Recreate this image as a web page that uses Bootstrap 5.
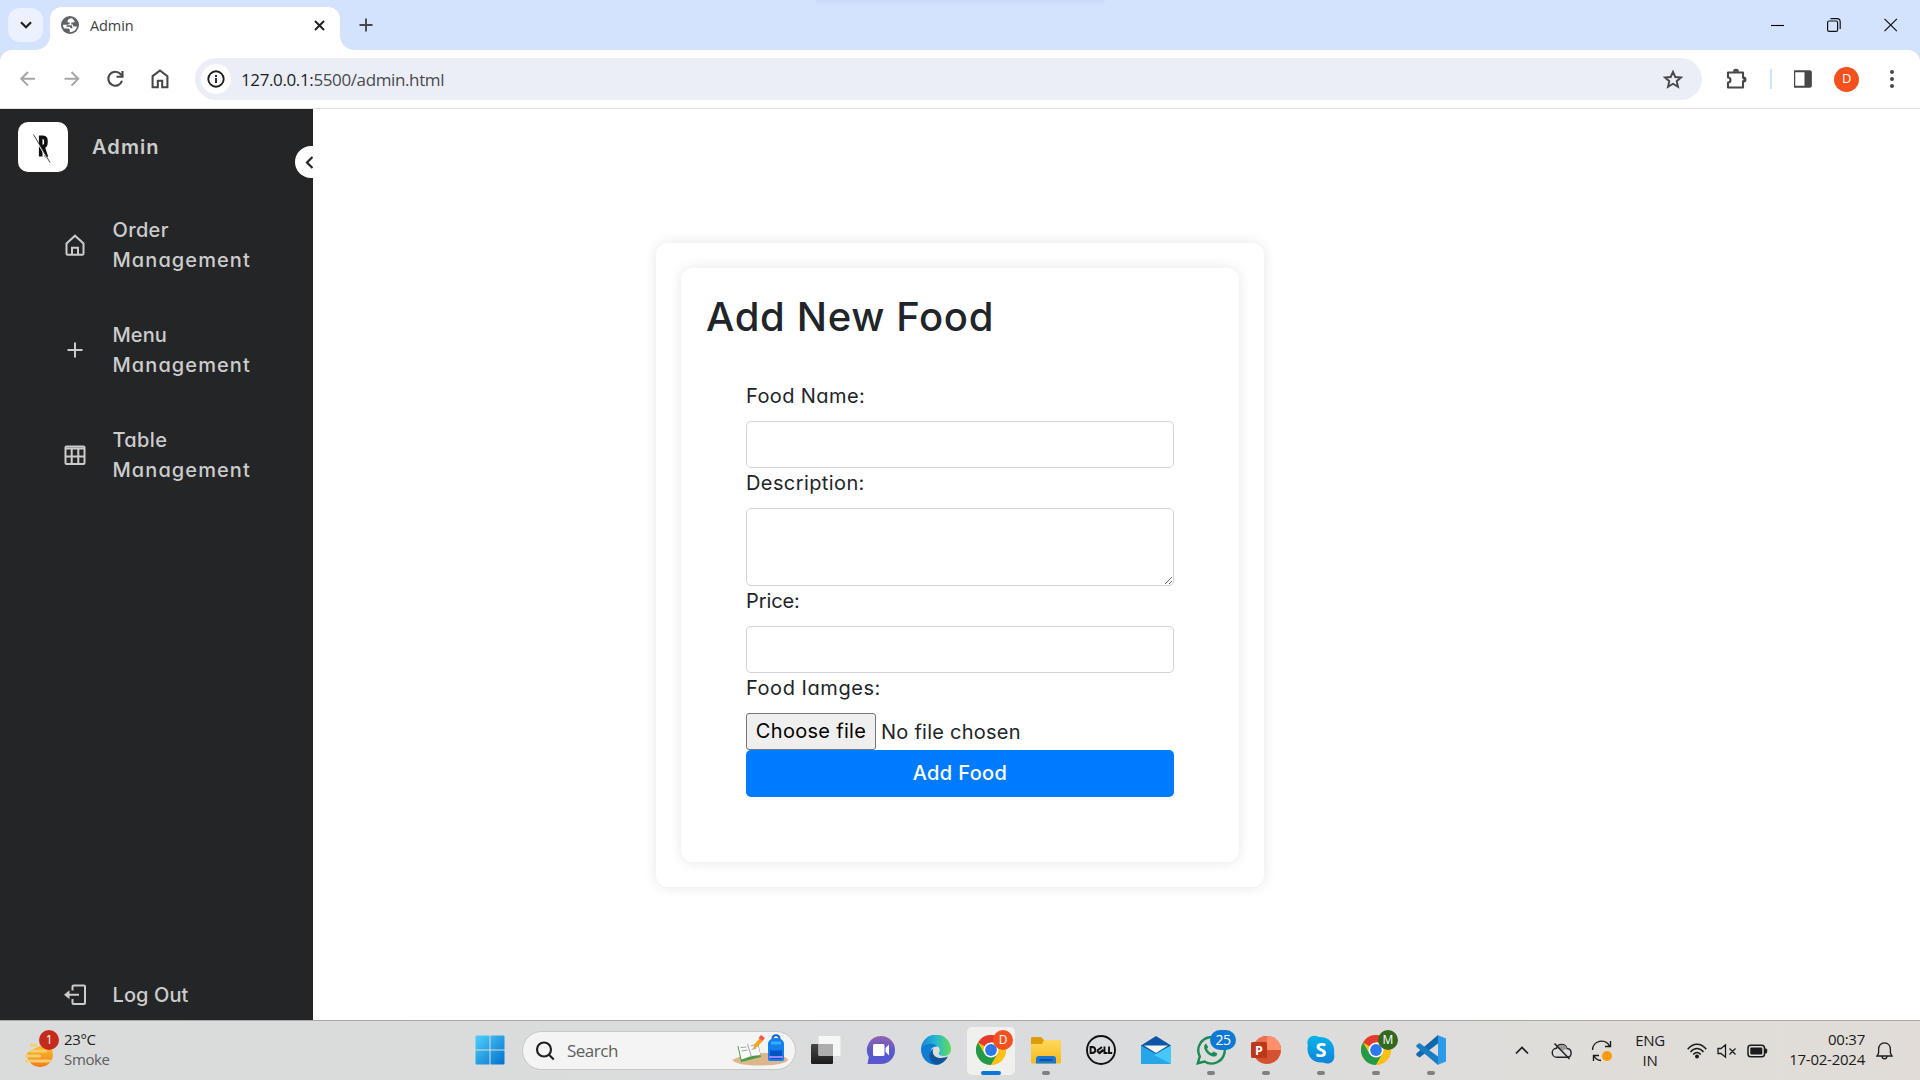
<!DOCTYPE html>
<html lang="en">
<head>
<meta charset="utf-8">
<meta name="viewport" content="width=device-width, initial-scale=1">
<title>Admin</title>
<link href="https://cdn.jsdelivr.net/npm/bootstrap@5.3.0/dist/css/bootstrap.min.css" rel="stylesheet">
<style>
  body { width: 1920px; height: 1080px; overflow: hidden; background: #fff; font-family: "Open Sans", "Noto Sans", sans-serif; }
  svg { display: block; flex: none; }

  /* browser window */
  .tab-strip { height: 50px; background: #d3e2fd; padding-left: 8px; position: relative; }
  .top-shade { position: absolute; left: 815px; top: 0; width: 290px; height: 5px; background: linear-gradient(#c9daf6, #d3e2fd); border-radius: 0 0 20px 20px; }
  .tab-search { width: 35px; height: 34px; border-radius: 12px; background: #ebf1fe; margin-top: 8px; }
  .browser-tab { position: relative; width: 290px; height: 43px; margin: 7px 0 0 7px; background: #fff; border-radius: 12px 12px 0 0; padding: 0 15px 7px 11px; }
  .browser-tab::before, .browser-tab::after { content: ""; position: absolute; bottom: 0; width: 14px; height: 14px; }
  .browser-tab::before { left: -14px; background: radial-gradient(circle at 0 0, transparent 13.5px, #fff 14px); }
  .browser-tab::after { right: -14px; background: radial-gradient(circle at 100% 0, transparent 13.5px, #fff 14px); }
  .tab-title { font-size: 14.5px; letter-spacing: -.1px; color: #3c3f43; margin-left: 11px; padding-top: 1px; }
  .new-tab { margin: 18px 0 0 19px; }
  .win-controls { margin-right: 21px; gap: 40px; padding-top: 3px; height: 46px; }
  .toolbar-wrap { background: #d3e2fd; }
  .tool-bar { height: 59px; background: #fff; border-radius: 12px 12px 0 0; border-bottom: 1px solid #dedede; padding: 0 17px 0 17px; }
  .nav-icons { gap: 21px; width: 178px; }
  .omnibox { width: 1507px; height: 42px; border-radius: 21px; background: #ebeef7; padding: 0 18px 0 6px; }
  .site-info { width: 30px; height: 30px; border-radius: 50%; background: #fff; }
  .url-text { font-size: 17px; letter-spacing: -.38px; color: #474a4e; margin-left: 10px; padding-top: 1px; }
  .url-text b { font-weight: 400; color: #1c1d1f; }
  .tool-sep { width: 2px; height: 20px; background: #d0e1fd; }
  .avatar-dot { width: 25px; height: 25px; border-radius: 50%; background: #f4511e; color: #fff; font-size: 13px; }

  /* admin page */
  .admin-page { height: 911px; font-family: "Inter", "Open Sans", sans-serif; font-feature-settings: "cv11"; font-size: 20px; line-height: 30px; letter-spacing: .4px; background: #fff; color: #212529; }
  .side-panel { width: 313px; background: #242526; color: #ccc; font-weight: 500; position: relative; overflow: hidden; padding: 13px 18px 10px; }
  .logo-box { width: 50px; height: 50px; border-radius: 10px; background: #fff; }
  .brand-name { font-weight: 600; margin-left: 24px; letter-spacing: 1.1px; }
  .fold-btn { position: absolute; left: 295px; top: 37px; width: 32px; height: 32px; border-radius: 50%; background: #fff; }
  .side-links { margin-top: 43px; gap: 45px; }
  .side-item { padding-left: 45px; gap: 25.5px; letter-spacing: .35px; }
  .side-item .wide { letter-spacing: 1.08px; }
  .side-item .tidy { letter-spacing: .1px; }
  .content-area { padding: 134px 0 0 343px; }
  .outer-card { width: 608px; height: 644px; border-radius: 12px; padding: 25px; box-shadow: 0 0 13px rgba(0,0,0,.1); background: #fff; }
  .inner-card { height: 594px; border-radius: 12px; padding: 25px; box-shadow: 0 0 13px rgba(0,0,0,.1); background: #fff; }
  .inner-card h1 { font-size: 40px; line-height: 48px; font-weight: 500; letter-spacing: .65px; margin: 0; }
  .food-form { padding: 40px 40px 0; }
  .food-form label { display: block; margin-bottom: 10px; }
  .food-form .form-control { height: 47.3px; border-radius: 5px; border-color: #ced4da; padding: 7px 15px; }
  .food-form textarea.form-control { height: 77.3px; }
  .file-row { height: 37px; gap: 5px; }
  .file-btn { border: 1px solid #767676; border-radius: 3px; background: #efefef; color: #000; height: 37px; width: 130px; line-height: 30px; padding: 2px 0; text-align: center; letter-spacing: .3px; }
  .file-name { letter-spacing: .25px; padding-top: 2px; }
  .food-form .btn-add { background: #007bff; color: #fff; font-size: 20px; font-weight: 500; line-height: 30px; height: 47px; border: 0; border-radius: 5px; letter-spacing: .35px; }

  /* task bar */
  .task-bar { height: 60px; border-top: 1px solid #a9a9a9; background: linear-gradient(90deg, #dadcdc 0, #dbdcdd 60%, #e0ddd9 85%, #e1dcd8); color: #1b1b1b; font-size: 15px; line-height: 20px; }
  .weather { width: 466px; padding: 0 0 4px 25px; gap: 11px; letter-spacing: -.35px; }
  .weather small { font-size: 15px; color: #5c5d5e; }
  .task-cell { width: 48px; height: 48px; margin-right: 7px; border-radius: 5px; position: relative; padding-bottom: 1px; }
  .task-cell.on { background: #f0f0ef; }
  .task-cell.run::after { content: ""; position: absolute; bottom: 0; left: 20px; width: 8px; height: 4px; border-radius: 2px; background: #808080; }
  .task-cell.on::after { left: 14px; width: 20px; background: #0b78d6; }
  .search-pill { width: 274px; height: 39px; border-radius: 20px; background: #f4f4f4; border: 1px solid #c6c7c7; margin: 0 6px 0 8px; padding: 0 6px 0 12px; font-size: 17px; color: #5e5e5e; letter-spacing: -.5px; }
  .tag-dot { position: absolute; border-radius: 10px; color: #fff; font-size: 12px; line-height: 20px; text-align: center; width: 20px; height: 20px; left: 25px; top: 3px; }
  .tag-dot.count { background: #0e78d5; width: 26px; font-size: 14px; left: 23px; letter-spacing: -.4px; }
  .tray { margin-left: auto; padding-right: 27px; letter-spacing: -.3px; }
  .lang-box { width: 30px; margin-right: 22px; padding-bottom: 2px; }
  .clock { width: 80px; text-align: right; margin: 0 11px 0 0; padding-bottom: 4px; letter-spacing: -.25px; white-space: nowrap; }
</style>
<script src="https://cdn.jsdelivr.net/npm/bootstrap@5.3.0/dist/js/bootstrap.bundle.min.js"></script>
</head>
<body class="d-flex flex-column">

<header>
  <div class="tab-strip d-flex align-items-start">
    <div class="top-shade"></div>
    <div class="tab-search d-flex align-items-center justify-content-center">
      <svg width="12" height="8" viewBox="0 0 12 8" fill="none" stroke="#1f1f1f" stroke-width="2.2"><path d="M1 1.2l5 5 5-5"/></svg>
    </div>
    <div class="browser-tab d-flex align-items-center">
      <svg width="18" height="18" viewBox="0 0 18 18"><circle cx="9" cy="9" r="9" fill="#5f6368"/><path d="M11 2.300C8 2.500 6.500 3.800 6.500 5.200c0 1.300 1.200 1.300 2.300 1.300 0 1.500-.8 2.200-2.300 2.200H2c0 1.500.5 2.800 1.300 3.900h3.500c1.500 0 2 .7 2 1.800v1.800c3.500 0 6.500-2.200 7.200-5.700h-2.500c-1.200 0-1.600-.8-1.600-2h-1.600V6.600h2c.8 0 1.200-.6 1.200-1.600z" fill="#fff"/><path d="M6 9.300h3.800c1 0 1.500.6 1.500 1.600v1.300H9.500c0-1-.6-1.500-1.700-1.500H5z" fill="#5f6368"/></svg>
      <span class="tab-title me-auto">Admin</span>
      <svg width="11" height="11" viewBox="0 0 11 11" stroke="#1f1f1f" stroke-width="1.9"><path d="M1 1l9 9M10 1l-9 9"/></svg>
    </div>
    <svg class="new-tab" width="14" height="14" viewBox="0 0 14 14" stroke="#454749" stroke-width="1.9"><path d="M7 .5v13M.5 7h13"/></svg>
    <div class="win-controls d-flex align-items-center ms-auto">
      <svg width="15" height="14" viewBox="0 0 15 14" stroke="#000" stroke-width="1.1"><path d="M1 7.500h13"/></svg>
      <svg width="17" height="14" viewBox="0 0 17 14" fill="none" stroke="#111" stroke-width="1.2"><rect x="2.600" y="3" width="10" height="10.400" rx="1.500"/><path d="M5.500 .7h6.500a3.200 3.200 0 0 1 3.200 3.200v7"/></svg>
      <svg width="17" height="14" viewBox="0 0 17 14" stroke="#111" stroke-width="1.2"><path d="M2.500 .8l12.400 12.400M14.900 .8L2.500 13.200"/></svg>
    </div>
  </div>
  <div class="toolbar-wrap">
    <div class="tool-bar d-flex align-items-center">
      <div class="nav-icons d-flex align-items-center">
        <svg width="22" height="22" viewBox="0 0 22 22" fill="none" stroke="#a5a6a8" stroke-width="2"><path d="M18 10.800H4.500M11 4L4.200 10.800 11 17.600"/></svg>
        <svg width="22" height="22" viewBox="0 0 22 22" fill="none" stroke="#a5a6a8" stroke-width="2"><path d="M4.500 10.800h13.500M11.500 4l6.800 6.800-6.800 6.800"/></svg>
        <svg width="24" height="22" viewBox="-1 0 24 22" fill="none" stroke="#454749" stroke-width="2.100"><path d="M18 12.800A7 7 0 1 1 16.500 6L18.500 8"/><path d="M18.500 3V8.800h-6"/></svg>
        <svg width="22" height="22" viewBox="-1 0 22 22" fill="none" stroke="#454749" stroke-width="2.100"><path d="M3.600 8.200L11 2.500l7.400 5.700v11H13.200v-6.500H8.800v6.500H3.600z"/></svg>
      </div>
      <div class="omnibox d-flex align-items-center">
        <span class="site-info d-flex align-items-center justify-content-center"><svg width="18" height="18" viewBox="0 0 18 18" fill="none" stroke="#1f1f1f" stroke-width="1.900"><circle cx="9" cy="9" r="7.700"/><path d="M9 8v5M9 5v1.900"/></svg></span>
        <span class="url-text me-auto"><b>127.0.0.1:</b>5500/admin.html</span>
        <svg width="22" height="20" viewBox="0 0 22 20" fill="none" stroke="#454749" stroke-width="1.900"><path d="M11 2.800l2.300 5.200 5.700.5-4.300 3.700 1.300 5.600-5-3-5 3 1.300-5.600L3 8.500l5.700-.5z"/></svg>
      </div>
      <div class="d-flex align-items-center flex-grow-1 justify-content-between" style="padding-left:23px">
        <svg width="23" height="22" viewBox="0 0 23 22"><path d="M3 4.500h15v5.200a1.800 1.800 0 0 1 0 3.600v6.200H3v-5a2.500 2.500 0 0 0 0-5z" fill="none" stroke="#454749" stroke-width="2.100" stroke-linejoin="round"/><path d="M8 3.800a3 3 0 0 1 6 0zM18.500 8.500a3 3 0 0 1 0 6z" fill="#454749"/></svg>
        <span class="tool-sep"></span>
        <svg width="19" height="18" viewBox="1 0 19 18"><rect x="1.200" y="1.200" width="16.600" height="15.600" rx="1" fill="none" stroke="#454749" stroke-width="2.100"/><path d="M11.500 1h6.500v16h-6.500z" fill="#454749"/></svg>
        <span class="avatar-dot d-flex align-items-center justify-content-center">D</span>
        <svg width="22" height="20" viewBox="0 0 22 20" fill="#454749"><circle cx="11" cy="3" r="2"/><circle cx="11" cy="10" r="2"/><circle cx="11" cy="17" r="2"/></svg>
      </div>
    </div>
  </div>
</header>

<main class="admin-page d-flex">
  <nav class="side-panel d-flex flex-column">
    <div class="d-flex align-items-center">
      <span class="logo-box d-flex align-items-center justify-content-center">
        <svg width="20" height="32" viewBox="1 0 20 32"><path d="M8.700 25.500V6.200h2.300c2.200 0 3 1.300 3 4.600 0 3.300-.8 4.700-3 4.700H8.700" fill="none" stroke="#111" stroke-width="3.600"/><path d="M11 15.500l3.600 10.500" fill="none" stroke="#111" stroke-width="3.400"/><path d="M1.200 4.300l17.300 29" stroke="#fff" stroke-width="1.200"/><path d="M1.500 3.500l16.500 28" stroke="#333" stroke-width=".9"/></svg>
      </span>
      <span class="brand-name">Admin</span>
    </div>
    <span class="fold-btn"><svg width="32" height="32" viewBox="0 0 32 32" fill="none" stroke="#242526" stroke-width="2.200"><path d="M17.500 11L12 16.500l5.500 5.500"/></svg></span>
    <div class="side-links d-flex flex-column">
      <a class="side-item d-flex align-items-center text-reset text-decoration-none">
        <svg width="24" height="24" viewBox="0 0 24 24" fill="none" stroke="#ccc" stroke-width="2"><path d="M3.500 10.500L12 2.700l8.500 7.800V20.500a1.200 1.200 0 0 1-1.200 1.200H4.700a1.200 1.200 0 0 1-1.200-1.200z"/><path d="M9 21v-6.300h6V21"/></svg>
        <span>Order<br><span class="wide">Management</span></span>
      </a>
      <a class="side-item d-flex align-items-center text-reset text-decoration-none">
        <svg width="24" height="24" viewBox="0 0 24 24" stroke="#ccc" stroke-width="2"><path d="M12 4.500v15M4.500 12h15"/></svg>
        <span><span class="tidy">Menu</span><br><span class="wide">Management</span></span>
      </a>
      <a class="side-item d-flex align-items-center text-reset text-decoration-none">
        <svg width="24" height="24" viewBox="0 0 24 24" fill="none" stroke="#ccc" stroke-width="2"><rect x="2.500" y="3.500" width="19" height="17.500" rx="1"/><path d="M2.500 5.500h19M2.500 13.500h19M8.700 5v16M15.300 5v16"/></svg>
        <span>Table<br><span class="wide">Management</span></span>
      </a>
    </div>
    <a class="side-item d-flex align-items-center text-reset text-decoration-none mt-auto">
      <svg width="24" height="24" viewBox="0 0 24 24" fill="none" stroke="#ccc" stroke-width="2"><path d="M9.500 7.500V3.500a1 1 0 0 1 1-1H21a1 1 0 0 1 1 1v16.500a1 1 0 0 1-1 1H10.500a1 1 0 0 1-1-1v-4M6 11.700h10"/><path d="M1 11.700l5.500-4.500v9z" fill="#ccc" stroke="none"/></svg>
      <span class="tidy">Log Out</span>
    </a>
  </nav>
  <section class="content-area">
    <div class="outer-card">
      <div class="inner-card">
        <h1>Add New Food</h1>
        <form class="food-form">
          <label>Food Name:</label>
          <input type="text" class="form-control">
          <label>Description:</label>
          <textarea class="form-control"></textarea>
          <label style="letter-spacing:-.1px">Price:</label>
          <input type="text" class="form-control">
          <label style="letter-spacing:.55px">Food Iamges:</label>
          <div class="file-row d-flex align-items-center"><span class="file-btn">Choose file</span><span class="file-name">No file chosen</span></div>
          <button type="button" class="btn btn-add w-100 d-block py-0">Add Food</button>
        </form>
      </div>
    </div>
  </section>
</main>

<footer class="task-bar d-flex align-items-center">
  <div class="weather d-flex align-items-center">
    <span class="position-relative"><svg width="28" height="36" viewBox="0 0 28 36"><defs><linearGradient id="sun" x2="0" y2="1"><stop stop-color="#fbc02d"/><stop offset="1" stop-color="#f27b1b"/></linearGradient></defs><path d="M2 23a13 13 0 0 0 26 0l-2-8H14L2 22z" fill="url(#sun)"/><path d="M6.500 14h4M6.500 20h14M1.500 25h13M1.500 30h23" stroke="#f3cf6e" stroke-width="3" stroke-linecap="round"/></svg>
    <span class="tag-dot" style="left:14px;top:-1px;background:#c42b1c">1</span></span>
    <div>23°C<br><small>Smoke</small></div>
  </div>

  <svg width="0" height="0" class="position-absolute"><defs>
    <symbol id="chrome" viewBox="0 0 30 30"><circle cx="15" cy="15" r="15" fill="#fbc116"/><path d="M15 15L2 7.500A15 15 0 0 1 28 7.500H15z" fill="#e33b2e"/><path d="M2 7.500A15 15 0 0 0 15 30l6.500-11.200L15 15 8.500 18.800z" fill="#229a4a"/><path d="M15 7.500h13A15 15 0 0 1 15 30l6.500-11.200z" fill="#fbc116"/><circle cx="15" cy="15" r="7.500" fill="#fff"/><circle cx="15" cy="15" r="5.900" fill="#2f78ec"/></symbol>
    <linearGradient id="win" x2="1" y2="1"><stop stop-color="#4fd0fb"/><stop offset="1" stop-color="#0370cd"/></linearGradient>
    <linearGradient id="edg" x1="0" x2="1"><stop stop-color="#1784d8"/><stop offset=".5" stop-color="#27b8cf"/><stop offset="1" stop-color="#61dc55"/></linearGradient>
    <linearGradient id="tms" x2="0" y2="1"><stop stop-color="#9263b0"/><stop offset=".6" stop-color="#5558cc"/><stop offset="1" stop-color="#5a57cf"/></linearGradient>
    <linearGradient id="fold" x2="0" y2="1"><stop stop-color="#ffd95a"/><stop offset="1" stop-color="#f6b91d"/></linearGradient>
    <linearGradient id="dark" x2="0" y2="1"><stop stop-color="#464646"/><stop offset="1" stop-color="#1b1b1b"/></linearGradient>
    <linearGradient id="sky" x2="0" y2="1"><stop stop-color="#08b4ea"/><stop offset="1" stop-color="#0f83d9"/></linearGradient>
  </defs></svg>

  <div class="task-cell d-flex align-items-center justify-content-center me-0"><svg width="30" height="30" viewBox="0 0 30 30" fill="url(#win)"><path d="M.5 1.500a1 1 0 0 1 1-1H14.500V14.500H.5zM15.500.5h13a1 1 0 0 1 1 1v13h-14zM.5 15.500h14v14h-13a1 1 0 0 1-1-1zM15.500 15.500h14v13a1 1 0 0 1-1 1h-13z"/></svg></div>
  <div class="search-pill d-flex align-items-center">
    <svg width="20" height="20" viewBox="0 0 20 20" fill="none" stroke="#222" stroke-width="2.200"><circle cx="9" cy="8.500" r="7"/><path d="M13.800 13.500l5 5"/></svg>
    <span class="me-auto" style="margin-left:12px">Search</span>
    <svg width="58" height="33" viewBox="0 0 58 33"><path d="M1 26l16-7h30l10 6c0 4-10 6.500-28 6.500S4 29 1 26z" fill="#dcb68d"/><path d="M6.500 12L27 8l3 15L10 28z" fill="#4e9b45"/><path d="M7 10l9 0 10-3 3.500 14-9 1-10 3.500z" fill="#fafafa"/><path d="M16.500 10l4 13M9.500 13.500l6-.5M10.500 17l6-1M19.500 12l5-1.500M20.500 15.500l5-1.500" stroke="#9aa4b0" fill="none"/><path d="M22 15l1.500-5L29 4l3 3-6 6z" fill="#f7a51e"/><path d="M27.500 4l2.500-3 4 3-2.500 3z" fill="#f05a47"/><path d="M41.500 5c0-5 7-5 7 0" fill="none" stroke="#1360c8" stroke-width="2"/><path d="M37 10c0-8 16-8 16 0v15c0 2-1.500 2-3 2H40c-1.500 0-3 0-3-2z" fill="#127ff0"/><path d="M39 16.500h12v7c0 1-1 1.500-2 1.500h-8c-1 0-2-.5-2-1.500z" fill="#0753bd"/><path d="M40 7.500h10v3H40z" fill="#35adff"/><path d="M38 23h14" stroke="#9c83ff" stroke-width="2"/></svg>
  </div>
  <div class="task-cell d-flex align-items-center justify-content-center"><svg width="30" height="30" viewBox="0 0 30 30"><rect y="9" width="22" height="20" rx="1.200" fill="url(#dark)"/><rect x="7.500" y="1" width="22" height="20" rx="1.200" fill="#f7f7f7" fill-opacity=".95"/><path d="M7.500 9H22v12H8.500a1 1 0 0 1-1-1z" fill="#adadad"/></svg></div>
  <div class="task-cell d-flex align-items-center justify-content-center"><svg width="30" height="30" viewBox="0 0 30 30"><path d="M15 1a14 14 0 0 1 0 28H1.500L2.800 22A14 14 0 0 1 15 1z" fill="url(#tms)"/><rect x="7" y="9" width="11.500" height="12" rx="1.500" fill="#fff"/><path d="M19.500 13l3.500-3.500v11L19.500 17z" fill="#fff"/></svg></div>
  <div class="task-cell d-flex align-items-center justify-content-center"><svg width="30" height="30" viewBox="0 0 30 30"><path d="M0 15a15 15 0 0 1 30-1c.3 5-4 7-7.500 7-4 0-6-2-4.500-3.500 2-3 0-6.500-4.500-7C7 10 2 12 0 15z" fill="url(#edg)"/><path d="M0 15c1-6 14-9 16-3-4-1-6.500 2-6.500 6 0 5 3 10.500 10 11A15 15 0 0 1 0 15z" fill="#0e7ed4"/><path d="M12.500 13.500c-3 7 4 12 14.500 8C23.500 28 18 30.300 14 29.500 7 26 6.500 17 12.500 13.500z" fill="#0e559c"/><path d="M13 12.500c3-.5 5 1.500 4.500 4-.3 1.500-.2 2.300.8 3-3 0-6-2.500-5.300-7z" fill="#dcdddd"/></svg></div>
  <div class="task-cell on run d-flex align-items-center justify-content-center"><svg width="30" height="30"><use href="#chrome"/></svg><span class="tag-dot" style="left:26px;background:#f4511e">D</span></div>
  <div class="task-cell run d-flex align-items-center justify-content-center"><svg width="30" height="30" viewBox="0 0 30 30"><path d="M0 3.500C0 2.500.7 2 1.500 2H10l3 3-2 5H0z" fill="#dd9d08"/><path d="M0 9h11l3-4h16v22a1.500 1.500 0 0 1-1.500 1.500h-27A1.500 1.500 0 0 1 0 27z" fill="url(#fold)"/><path d="M5 28.500V24a3 3 0 0 1 3-3h14a3 3 0 0 1 3 3v4.500z" fill="#1878d2"/><path d="M8.500 25h13" stroke="#0b4a92" stroke-width="1.600"/></svg></div>
  <div class="task-cell d-flex align-items-center justify-content-center"><svg width="30" height="30" viewBox="0 0 30 30" fill="none" stroke="#111"><circle cx="15" cy="15" r="14" stroke-width="1.900"/><path d="M4.600 12v6h1.500c4.200 0 4.200-6 0-6zM11 15.800l5-3.800M12.800 18.200l4.500-3.500M11 15.800l2.500 2.500 4-3M18.500 11.500v6.500h3M23 11.500v6.500h3.200" stroke-width="1.900"/></svg></div>
  <div class="task-cell d-flex align-items-center justify-content-center"><svg width="30" height="30" viewBox="0 0 30 30"><path d="M0 10.500L15 1l15 9.500v10H0z" fill="#0d55a5"/><path d="M0 10.500L15 19l15-8.500V29H0z" fill="#27a5e9"/><path d="M3 10.500h24L15 18z" fill="#f4f4f4"/><path d="M13 20l17-9.500V29z" fill="#45c8f5"/></svg></div>
  <div class="task-cell run d-flex align-items-center justify-content-center"><svg width="30" height="30" viewBox="0 0 30 30" fill="none"><path d="M1.800 28.200l2-6.800A13.200 13.200 0 1 1 8.500 26.500z" stroke="#1c8b55" stroke-width="2.400"/><path d="M10 8.500l2.200 3.500-1.200 2c1 2 2.500 3.300 4.700 4.200l1.800-1.600 3.800 1.800c-.5 3-3 3.600-5.300 2.800C12 19.800 9.500 17 8.300 13.500c-.5-2 .2-4.200 1.700-5z" fill="#1c8b55"/></svg><span class="tag-dot count">25</span></div>
  <div class="task-cell run d-flex align-items-center justify-content-center"><svg width="30" height="30" viewBox="0 0 30 30"><circle cx="16" cy="15" r="14" fill="#d6512f"/><path d="M16 1a14 14 0 0 1 14 14H16z" fill="#ff8f6b"/><path d="M16 1v14H2A14 14 0 0 1 16 1z" fill="#e9714f"/><rect y="7" width="16" height="16" rx="1.500" fill="#bd371b"/><text x="8" y="19.500" text-anchor="middle" font-size="12.500" font-weight="700" fill="#fff">P</text></svg></div>
  <div class="task-cell run d-flex align-items-center justify-content-center"><svg width="30" height="30" viewBox="0 0 30 30" fill="url(#sky)"><path d="M10 1C4 0 0 5 1.800 10.500 0 20 6 28.500 17 27.500c7 3.500 13-2 11-9C29.500 9 23 1.500 13.500 2z"/><text x="15" y="22.300" text-anchor="middle" font-size="20" font-weight="700" fill="#fff">S</text></svg></div>
  <div class="task-cell run d-flex align-items-center justify-content-center"><svg width="30" height="30"><use href="#chrome"/></svg><span class="tag-dot" style="left:26px;background:#33691e">M</span></div>
  <div class="task-cell run d-flex align-items-center justify-content-center"><svg width="30" height="30" viewBox="0 0 30 30"><path d="M22 0l0 8.500L3.500 22.500.3 20.200v-1.700z" fill="#1069ad"/><path d="M22 30v-8.500L3.500 8 .3 10.200v1.600z" fill="#1a7dc4"/><path d="M21.500 0L30 3.500v23L21.500 30c.4-.5.5-1 .5-2V2c0-1-.1-1.500-.5-2z" fill="#2a9bea"/></svg></div>

  <div class="tray d-flex align-items-center">
    <svg width="14" height="9" viewBox="0 0 14 9" fill="none" stroke="#1b1b1b" stroke-width="1.700" style="margin-right:22px"><path d="M1 7.500l6-6 6 6"/></svg>
    <svg width="22" height="18" viewBox="0 0 22 18" style="margin-right:18px"><path d="M6 15.200a4.500 4.500 0 0 1-.5-9C7 1 14.500 1 16 6.500c5.500.3 5.500 8.500 0 8.700z" fill="#ddd" stroke="#222" stroke-width="1.400"/><path d="M6 6.500c2-5 8.500-5 10 0l-4 2z" fill="#999"/><path d="M3.500 1.500l15 15.500" stroke="#222" stroke-width="1.500"/></svg>
    <svg width="22" height="22" viewBox="0 0 22 22" fill="none" stroke="#1b1b1b" stroke-width="1.400" style="margin-right:22px"><path d="M1.500 10A9 9 0 0 1 18.500 6M19.500 1v5.500H14M10 20.500A9 9 0 0 1 3 16M2.500 21v-5.500H8"/><circle cx="16" cy="16" r="5" fill="#fb9a0b" stroke="none"/></svg>
    <div class="lang-box text-center">ENG<br>IN</div>
    <svg width="20" height="16" viewBox="0 0 20 16" fill="none" stroke="#1b1b1b" stroke-width="1.400" style="margin-right:10px"><path d="M.7 6.200C6-.4 14-.4 19.300 6.200M3.500 9c4-4.600 9-4.600 13 0M6.200 11.500c2.500-2.600 5.100-2.600 7.600 0"/><circle cx="10" cy="13.500" r="2" fill="#1b1b1b" stroke="none"/></svg>
    <svg width="20" height="16" viewBox="0 0 20 16" fill="none" stroke="#1b1b1b" stroke-width="1.300" style="margin-right:10px"><path d="M1 5.500h3L8.500 1.800v12.400L4 10.500H1zM12.500 5.500l6 6M18.500 5.500l-6 6"/></svg>
    <svg width="21" height="14" viewBox="0 0 21 14" style="margin-right:17px"><rect x="1" y="1.200" width="16.500" height="11.600" rx="2.800" fill="none" stroke="#1b1b1b" stroke-width="1.500"/><rect x="3.300" y="3.400" width="12" height="7.200" rx="1" fill="#1b1b1b"/><path d="M18 4.500h1.200l1 1v3l-1 1H18z" fill="#1b1b1b"/></svg>
    <div class="clock">00:37<br>17-02-2024</div>
    <svg width="17" height="20" viewBox="0 0 17 20" fill="none" stroke="#1b1b1b" stroke-width="1.300"><path d="M1 15l1.600-3V8.500C2.600 4.500 5 1.800 8.500 1.800s5.900 2.700 5.900 6.700V12l1.600 3zM6 15.500c.3 3 4.700 3 5 0"/></svg>
  </div>
</footer>
</body>
</html>
